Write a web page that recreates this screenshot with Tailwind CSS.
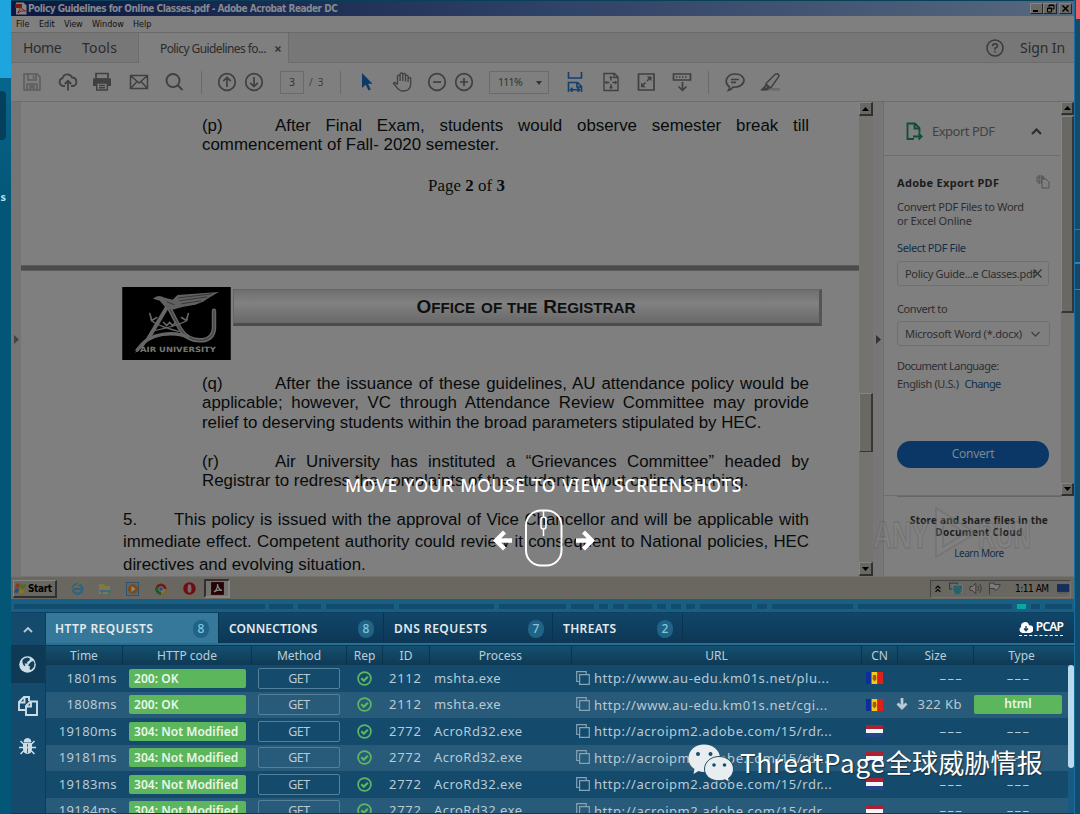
<!DOCTYPE html>
<html lang="en">
<head>
<meta charset="utf-8">
<title>Task report</title>
<script src="https://cdn.jsdelivr.net/npm/@tailwindcss/browser@4"></script>
</head>
<body class="w-[1080px] h-[814px] overflow-hidden bg-[#144b6d] font-['Noto_Sans',sans-serif]">
<div class="relative flex w-[1080px] h-[814px] overflow-hidden">

  <!-- left page edge -->
  <aside class="w-[11px] shrink-0 flex flex-col bg-gradient-to-b from-[#07658c] from-10% to-[#045676] to-25% overflow-hidden">
    <div class="h-[78px] bg-[#1fa5dd]"></div>
    <div class="mt-[13px] h-[49px] w-[6px] rounded-r bg-[#04405c]"></div>
    <div class="mt-[48px] h-[16px] w-[6px] flex justify-end text-[11px] leading-[18px] font-bold text-[#b4e2f2]">s</div>
  </aside>

  <main class="w-[1063px] shrink-0 flex flex-col">
    <!-- remote desktop -->
    <section class="h-[599px] shrink-0 flex flex-col bg-[#7f7f7f] overflow-hidden">
      <div class="h-[16px] shrink-0 border-t border-[#0a3f58] bg-gradient-to-r from-[#0b1840] via-[#2e4167] via-50% to-[#56697e] flex items-center pl-[4px] pr-[2px]">
        <svg class="w-[12px] h-[13px]" viewBox="0 0 12 13"><path d="M1 .5h7.500l3 3v9H1z" fill="#858585"/><path d="M0 2h7v4H0z" fill="#7b1713"/><path d="M2.500 11q3-3 3-7q1 4 5 5q-4-1-8 2" fill="none" stroke="#8a1c16"/></svg>
        <span class="ml-px whitespace-nowrap text-[10px] leading-[14px] font-bold text-[#858990] font-['DejaVu_Sans_Condensed'] tracking-[-0.51px]">Policy Guidelines for Online Classes.pdf - Adobe Acrobat Reader DC</span>
        <div class="ml-auto flex">
          <div class="w-[13px] h-[11px] bg-[#6a6863] border border-t-[#858585] border-l-[#858585] border-[#242424] flex items-end pl-[2px] pb-px"><i class="block w-[5px] h-[2px] bg-black"></i></div>
          <div class="w-[14px] h-[11px] bg-[#6a6863] border border-t-[#858585] border-l-[#858585] border-[#242424]"><svg class="block mx-auto w-[9px] h-[9px]" viewBox="0 0 9 9" fill="none" stroke="#000"><path d="M3 3V1h5v4H6M3 1.500h5M1.500 4h4v4h-4zM1 4.500h5"/></svg></div>
          <div class="ml-[2px] w-[13px] h-[11px] bg-[#6a6863] border border-t-[#858585] border-l-[#858585] border-[#242424]"><svg class="block mx-auto w-[9px] h-[9px]" viewBox="0 0 9 9"><path d="M1.500 1.500l6 6M7.500 1.500l-6 6" stroke="#000" stroke-width="1.500"/></svg></div>
        </div>
      </div>
      <nav class="h-[16px] shrink-0 flex items-center gap-[9px] pl-[5px] text-[9px] leading-[16px] text-[#101010] bg-[#7f7f7f] font-['DejaVu_Sans_Condensed']">
        <span class="w-[14px] whitespace-nowrap">File</span><span class="w-[16px] whitespace-nowrap">Edit</span><span class="w-[19px] whitespace-nowrap tracking-[-0.2px]">View</span><span class="w-[32px] whitespace-nowrap">Window</span><span>Help</span>
      </nav>
      <!-- document tabs -->
      <div class="h-[31px] shrink-0 flex bg-[#777] border-t border-[#6a6a6a] text-[#2b2b2b]">
        <div class="w-[128px] border-r border-b border-[#6c6c6c] flex items-center text-[14px] pl-[12px]">
          <span class="w-[59px] tracking-[-0.4px]">Home</span><span class="tracking-[0.2px]">Tools</span>
        </div>
        <div class="w-[149px] bg-[#7f7f7f] flex items-center pt-px pl-[21px] text-[12px] tracking-[-0.59px] whitespace-nowrap"><span class="w-[115px]">Policy Guidelines fo...</span><svg class="w-[6px] h-[6px]" viewBox="0 0 6 6"><path d="M.5.5l5 5M5.500.5l-5 5" stroke="#333" stroke-width="1.500"/></svg></div>
        <div class="grow border-l border-b border-[#6c6c6c] flex items-center justify-end pr-[9px]">
          <svg class="w-[18px] h-[18px]" viewBox="0 0 18 18" fill="none" stroke="#3a3a3a" stroke-width="1.500"><circle cx="9" cy="9" r="8"/><path d="M6.500 7.200Q6.700 4.800 9 4.800T11.500 7Q11.500 8.300 9 9.200V10.800M9 12v1.600"/></svg>
          <span class="ml-[16px] text-[14px] tracking-[-0.1px]">Sign In</span>
        </div>
      </div>
      <!-- toolbar -->
      <div class="h-[39px] shrink-0 flex items-center border-b border-[#6d6d6d] pl-[11px] text-[#3d3d3d] [&>svg]:w-5 [&>svg]:h-5 [&>svg]:shrink-0">
        <svg viewBox="0 0 20 20" fill="none" stroke="#5c5c5c" stroke-width="1.500"><path d="M2 2h13l3 3v13H2zM6 2v6h8V2M11.500 3.500v3M5 18v-6h10v6M7 14h6M7 16h6"/></svg>
        <svg class="ml-[16px]" viewBox="0 0 20 20" fill="none" stroke="#404040" stroke-width="1.800"><path d="M7 14H5a4 4 0 0 1-.5-7.800A5 5 0 0 1 14 5.500 4.300 4.300 0 0 1 15 14h-2M10 18.500V9M6.800 12L10 8.800l3.200 3.200"/></svg>
        <svg class="ml-[14px]" viewBox="0 0 20 20"><path d="M4 1.500h12V7H4z" fill="none" stroke="#404040" stroke-width="1.700"/><path d="M1 6.500h18V14h-3v-3H4v3H1z" fill="#404040"/><path d="M4.700 11h10.600v7H4.700zM7 13.500h6M7 15.800h6" fill="none" stroke="#404040" stroke-width="1.500"/></svg>
        <svg class="ml-[17px]" viewBox="0 0 20 20" fill="none" stroke="#404040" stroke-width="1.500"><path d="M1.500 3.500h17v13h-17zM2 4l8 7 8-7M2 16l6-6.500M18 16l-6-6.500"/></svg>
        <svg class="ml-[15px]" viewBox="0 0 20 20" fill="none" stroke="#404040" stroke-width="1.900"><circle cx="9" cy="8.500" r="6.500"/><path d="M13.500 13l5 5"/></svg>
        <i class="ml-[17px] w-px h-[23px] bg-[#6a6a6a]"></i>
        <svg class="ml-[15px]" viewBox="0 0 20 20" fill="none" stroke="#404040" stroke-width="1.700"><circle cx="10" cy="10" r="8.300"/><path d="M10 15V5.500M6.200 9.200L10 5.400l3.800 3.800"/></svg>
        <svg class="ml-[7px]" viewBox="0 0 20 20" fill="none" stroke="#404040" stroke-width="1.700"><circle cx="10" cy="10" r="8.300"/><path d="M10 5v9.500M6.200 10.800l3.800 3.800 3.800-3.800"/></svg>
        <div class="ml-[16px] w-[24px] h-[23px] border border-[#6b6b6b] text-[10px] leading-[21px] text-center text-[#333]">3</div>
        <span class="ml-[5px] w-[18px] text-[10px] whitespace-pre tracking-[1.200px]">/ 3</span>
        <i class="ml-[13px] w-px h-[23px] bg-[#6a6a6a]"></i>
        <svg class="ml-[16px]" viewBox="0 0 20 20"><path d="M5 1v15l3.700-3.300L11.500 18.500l2.200-1-2.600-5.700H15.500z" fill="#0f3a66"/></svg>
        <svg class="ml-[15px]" viewBox="0 0 20 20" fill="none" stroke="#404040" stroke-width="1.300"><path d="M5.500 12.500V4.500a1.300 1.300 0 0 1 2.600 0V9V2.300a1.300 1.300 0 0 1 2.700 0V9V2.700a1.300 1.300 0 0 1 2.700 0V9.500V4.500a1.300 1.300 0 0 1 2.600 0V10M16.100 6.500q1.300-1.500 2.600-.5v6.500q-.5 6.500-7.700 6.500c-5 0-6-4-9.500-7.500q.5-2.500 4 1"/></svg>
        <svg class="ml-[15px]" viewBox="0 0 20 20" fill="none" stroke="#404040" stroke-width="1.700"><circle cx="10" cy="10" r="8.300"/><path d="M6 10h8"/></svg>
        <svg class="ml-[7px]" viewBox="0 0 20 20" fill="none" stroke="#404040" stroke-width="1.700"><circle cx="10" cy="10" r="8.300"/><path d="M6 10h8M10 6v8"/></svg>
        <div class="ml-[15px] w-[60px] h-[23px] border border-[#6b6b6b] flex items-center justify-between pl-[8px] pr-[6px] pt-px text-[10.500px] tracking-[-0.7px] text-[#333]"><span>111%</span><svg class="w-[6px] h-[4px]" viewBox="0 0 6 4"><path d="M0 0h6L3 4z" fill="#333"/></svg></div>
        <svg class="ml-[16px]" viewBox="0 0 20 20" fill="none" stroke="#123f6e" stroke-width="1.600"><path d="M3.500 0v6h13V0M3.500 20v-9.500h9l4 4V20M12 10.500v4.500h4.500M6 17.800h8M7.500 15.800l-2 2 2 2M12.500 15.800l2 2-2 2" /></svg>
        <svg class="ml-[16px]" viewBox="0 0 20 20" fill="none" stroke="#404040" stroke-width="1.400"><path d="M3 1.500h10.500L17 5v13.500H3zM13 1.500V5.500h4M10 5v3.500M10 12v4M5 10.500h3.500M11.500 10.500H15M8.700 6L10 4.700 11.300 6M8.700 15L10 16.300 11.300 15M6 9.200L4.700 10.500 6 11.800M14 9.200l1.300 1.300L14 11.800"/></svg>
        <svg class="ml-[15px]" viewBox="0 0 20 20" fill="none" stroke="#404040" stroke-width="1.700"><path d="M2.500 2h15.500v16H2.500z"/><path d="M11 9l4-4M9.500 10.500L5.500 14.500"/><path d="M10.800 4.500h4.700v4.700zM5 10.500v4.700h4.700z" fill="#404040" stroke="none"/></svg>
        <svg class="ml-[16px]" viewBox="0 0 20 20" fill="none" stroke="#404040" stroke-width="1.700"><path d="M1.500 2h17v6h-17z"/><path d="M4 5h12" stroke-dasharray="1.500 1.500"/><path d="M10.500 10v8M6.500 14.500l4 3.800 4-3.800"/></svg>
        <i class="ml-[16px] w-px h-[23px] bg-[#6a6a6a]"></i>
        <svg class="ml-[16px]" viewBox="0 0 20 20" fill="none" stroke="#404040" stroke-width="1.700"><path d="M4.300 14.800C-1.500 10.500 1.500 2 10 2s11.500 6.500 6.500 11q-3 2.500-8.500 2.200Q6 18 3.500 18.300q1.500-2 .8-3.500zM6 7.500h8M6 10.300h5"/></svg>
        <svg class="ml-[15px]" viewBox="0 0 20 20"><path d="M8 16h12v2.500H6z" fill="#6a6a6a"/><path d="M6 11.500L15 2.500q1.500-1.500 3-.3t.3 3L11 15.500 8 16zM4.500 15q1-2 2-2.500l3 2.500-2 2.500H2z" fill="none" stroke="#404040" stroke-width="1.500"/><path d="M1 18.500l4-4 2.500 2L6 18.500z" fill="#404040"/></svg>
      </div>

      <!-- viewer -->
      <div class="h-[474px] shrink-0 flex">
        <div class="w-[10px] shrink-0 bg-[#757575] flex items-center justify-center"><svg class="w-[5px] h-[9px]" viewBox="0 0 5 9"><path d="M0 0l5 4.500L0 9z" fill="#444"/></svg></div>
        <article class="w-[838px] shrink-0 overflow-hidden bg-[#7f7f7f] text-[#080b0b] font-['Liberation_Sans'] text-[16.870px] leading-[20px] whitespace-nowrap">
          <div class="ml-[181px] w-[607px] pt-[14px]">
            <div class="flex"><span class="w-[73px]">(p)</span><p class="grow [text-align-last:justify]">After Final Exam, students would observe semester break till</p></div>
            <p class="mt-[-1px] tracking-[0.03px]">commencement of Fall- 2020 semester.</p>
          </div>
          <p class="mt-[21px] pl-[407px] font-['Liberation_Serif'] tracking-[0.06px]">Page <b>2</b> of <b>3</b></p>
          <div class="mt-[69px] h-[6px] bg-[#4b4b4b] border-y border-[#5d5d5d]"></div>
          <div class="mt-[16px] ml-[101px] flex">
            <svg class="w-[109px] h-[73px] shrink-0" viewBox="0 0 110 74">
              <rect width="110" height="74" fill="#000"/>
              <g fill="none" stroke="#666" stroke-linecap="round">
                <path d="M45 21L26 53" stroke-width="4"/>
                <path d="M48 22L59 43Q67 55 81 54Q92 53 93 42V24" stroke-width="4.500"/>
                <path d="M48 22L59 43Q67 55 81 54Q92 53 93 42V24" stroke="#454545" stroke-width="1.500"/>
                <path d="M15 64Q25 50 41 48T66 51" stroke-width="3.500"/>
                <path d="M29 33Q32 38 57 45M66 33Q62 38 29 45" stroke-width="1.300"/>
                <path d="M28 27l2 7 5-3M67 27l-2 7-5-3M42 36l3 3 3-3 3 3 3-3" stroke-width="1.700"/>
              </g>
              <path d="M13 67Q20 53 27 51L22 60z" fill="#666"/>
              <path d="M31 12Q36 7 43 11L51 13 56 8 98 5 88 11 82 15 74 18 62 20 51 23 44 21 38 14z" fill="#606060"/>
              <path d="M57 11l34-4M58 14l28-4M60 17l20-3M45 15l8 3" stroke="#2c2c2c" fill="none" stroke-width=".8"/>
              <text x="18" y="66" font-size="7.500" font-weight="bold" font-family="DejaVu Sans" fill="#767676" textLength="77" lengthAdjust="spacingAndGlyphs">AIR UNIVERSITY</text>
            </svg>
            <div class="mt-[2px] ml-[2px] w-[589px] h-[37px] border-t border-l border-[#666] border-r-3 border-r-[#555] border-b-3 border-b-[#4c4c4c] bg-gradient-to-b from-[#6f6f6f] via-[#818181] via-40% to-[#696969] flex justify-center items-center font-bold text-[19px] text-[#101010]"><span class="w-[219px] mt-[2px] -ml-px [text-align-last:justify]">O<small class="text-[15.200px]">FFICE</small> <small class="text-[15.200px]">OF THE</small> R<small class="text-[15.200px]">EGISTRAR</small></span></div>
          </div>
          <div class="ml-[181px] w-[607px] mt-[13px]">
            <div class="flex leading-[21px]"><span class="w-[73px]">(q)</span><p class="grow [text-align-last:justify]">After the issuance of these guidelines, AU attendance policy would be</p></div>
            <p class="leading-[18px] [text-align-last:justify]">applicable; however, VC through Attendance Review Committee may provide</p>
            <p class="leading-[21px]">relief to deserving students within the broad parameters stipulated by HEC.</p>
            <div class="mt-[19px] flex leading-[20px]"><span class="w-[73px]">(r)</span><p class="grow [text-align-last:justify]">Air University has instituted a “Grievances Committee” headed by</p></div>
            <p class="leading-[18px]">Registrar to redress the complaints of the students about online teaching.</p>
          </div>
          <div class="ml-[102px] w-[686px] mt-[19px] leading-[22px]">
            <div class="flex"><span class="w-[51px]">5.</span><p class="grow [text-align-last:justify]">This policy is issued with the approval of Vice Chancellor and will be applicable with</p></div>
            <p class="[text-align-last:justify]">immediate effect. Competent authority could review it consequent to National policies, HEC</p>
            <p class="leading-[24px]">directives and evolving situation.</p>
          </div>
        </article>
        <!-- document scrollbar -->
        <div class="w-[14px] shrink-0 bg-[#75736f] flex flex-col">
          <div class="h-[14px] bg-[#6a6863] border border-t-[#858585] border-l-[#858585] border-r-2 border-b-2 border-[#303030] flex items-center justify-center"><svg class="w-[7px] h-[4px]" viewBox="0 0 7 4"><path d="M0 4L3.500 0 7 4z"/></svg></div>
          <div class="mt-[277px] h-[59px] bg-[#6a6863] border border-t-[#858585] border-l-[#858585] border-r-2 border-[#363636]"></div>
          <div class="mt-auto h-[14px] bg-[#6a6863] border border-t-[#858585] border-l-[#858585] border-r-2 border-b-2 border-[#303030] flex items-center justify-center"><svg class="w-[7px] h-[4px]" viewBox="0 0 7 4"><path d="M0 0L3.500 4 7 0z"/></svg></div>
        </div>
        <div class="w-[11px] shrink-0 bg-[#777] border-r border-[#6e6e6e] flex items-center justify-center"><svg class="w-[5px] h-[9px]" viewBox="0 0 5 9"><path d="M0 0l5 4.500L0 9z" fill="#333"/></svg></div>
        <!-- export panel -->
        <div class="w-[190px] shrink-0 flex flex-col text-[11px] leading-[14px] text-[#2e2e2e] whitespace-nowrap">
          <div class="h-[394px] flex">
            <div class="w-[177px] flex flex-col border-b border-[#6e6e6e]">
              <div class="h-[54px] shrink-0 border-b border-[#6e6e6e] flex items-center pt-[5px] pl-[22px] pr-[19px]">
                <svg class="w-[17px] h-[19px]" viewBox="0 0 17 19" fill="none" stroke="#114d3d" stroke-width="1.800"><path d="M8 17H1.500V1.500H9L13.500 6v5M8.500 1.500v5h5M7 14.500h8M12.500 11.500l3.200 3-3.200 3"/></svg>
                <span class="ml-[9px] text-[13px] tracking-[-0.5px] text-[#414141]">Export PDF</span>
                <svg class="ml-auto w-[11px] h-[7px]" viewBox="0 0 11 7"><path d="M1 6l4.500-4.500L10 6" fill="none" stroke="#2e2e2e" stroke-width="2.200"/></svg>
              </div>
              <div class="pl-[13px] pr-[11px] flex flex-col">
                <div class="mt-[20px] flex h-[14px] text-[#1c1c1c] font-bold tracking-[0.29px]">Adobe Export PDF
                  <svg class="ml-auto -mt-[2px] w-[15px] h-[15px]" viewBox="0 0 15 15" fill="#5b5b5b"><circle cx="5.500" cy="5.500" r="4.500"/><path d="M1 5.500h9M5.500 1v9M3 2v7" stroke="#7f7f7f" stroke-width=".6"/><path d="M7 5h4l3 3v6H7z" fill="#7f7f7f" stroke="#555"/></svg>
                </div>
                <p class="mt-[10px] tracking-[-0.28px]">Convert PDF Files to Word<br><span class="tracking-[-0.15px]">or Excel Online</span></p>
                <p class="mt-[13px] tracking-[-0.37px] text-[#102f49]">Select PDF File</p>
                <div class="mt-[6px] w-[152px] h-[25px] rounded-[3px] border border-[#707070] flex items-center pl-[7px] tracking-[-0.31px]"><span class="w-[126px]">Policy Guide...e Classes.pdf</span><svg class="ml-[2px] w-[9px] h-[9px]" viewBox="0 0 9 9"><path d="M.5.5l8 8M8.500.5l-8 8" stroke="#333" stroke-width="1.200"/></svg></div>
                <p class="mt-[16px] tracking-[-0.4px]">Convert to</p>
                <div class="mt-[5px] w-[153px] h-[25px] rounded-[3px] border border-[#707070] flex items-center pt-px pl-[7px] tracking-[-0.24px]"><span class="w-[126px]">Microsoft Word (*.docx)</span><svg class="w-[9px] h-[6px]" viewBox="0 0 9 6"><path d="M.5 1l4 4 4-4" fill="none" stroke="#444" stroke-width="1.400"/></svg></div>
                <p class="mt-[13px] tracking-[-0.54px]">Document Language:</p>
                <p class="mt-[4px] tracking-[-0.36px]">English (U.S.)<span class="ml-[6px] text-[#102f49] tracking-[-0.6px]">Change</span></p>
                <div class="mt-[50px] w-[152px] h-[27px] rounded-full bg-[#0a3765] text-[#7b8793] text-[12px] leading-[26px] tracking-[-0.24px] text-center">Convert</div>
              </div>
            </div>
            <div class="w-[13px] bg-[#75736f] flex flex-col">
              <div class="h-[13px] bg-[#6a6863] border border-t-[#858585] border-l-[#858585] border-r-2 border-b-2 border-[#303030] flex items-center justify-center"><svg class="w-[7px] h-[4px]" viewBox="0 0 7 4"><path d="M0 4L3.500 0 7 4z"/></svg></div>
              <div class="h-[197px] mt-px bg-[#6a6863] border border-t-[#858585] border-l-[#858585] border-r-2 border-b-2 border-[#363636]"></div>
              <div class="mt-auto h-[13px] bg-[#6a6863] border border-t-[#858585] border-l-[#858585] border-r-2 border-b-2 border-[#303030] flex items-center justify-center"><svg class="w-[7px] h-[4px]" viewBox="0 0 7 4"><path d="M0 0L3.500 4 7 0z"/></svg></div>
            </div>
          </div>
          <div class="relative grow flex flex-col text-center text-[10px] leading-[13px] text-[#1e1e1e] font-bold">
            <div class="mx-[13px] border-t border-[#666]"></div>
            <p class="mt-[17px] tracking-[0.18px]">Store and share files in the</p>
            <p class="-mt-px tracking-[0.32px]">Document Cloud</p>
            <p class="mt-[8px] font-normal text-[#102f49] tracking-[-0.45px]">Learn More</p>
            <svg class="absolute left-[-14px] top-[9px] w-[170px] h-[54px]" viewBox="0 0 170 54"><g font-family="Liberation Sans" font-weight="bold" font-size="37" fill="#8a8a8a" fill-opacity=".28" stroke="#626262" stroke-opacity=".35" stroke-width="1.800"><text x="3" y="43" textLength="56" lengthAdjust="spacingAndGlyphs">ANY</text><text x="108" y="43" textLength="53" lengthAdjust="spacingAndGlyphs">RUN</text><path d="M66 3l40 25-40 24zM73 14v28l23-14z"/></g></svg>
          </div>
        </div>
      </div>

      <!-- taskbar -->
      <div class="h-[23px] shrink-0 bg-[#6a6761] border-t border-[#75736f] flex items-center pt-px pl-[2px] pr-[3px] font-['DejaVu_Sans_Condensed'] text-[10px] text-black">
        <div class="w-[44px] h-[18px] border border-t-[#858585] border-l-[#858585] border-r-2 border-b-2 border-[#303030] flex items-center font-bold tracking-[-0.4px]">
          <svg class="w-[13px] h-[12px] mr-px" viewBox="0 0 13 12"><path d="M2 2q2-1.500 4 0L5 6Q3 5 1 6z" fill="#8c3a17"/><path d="M7 2q2 1.500 5 0L11 6Q8 7.500 6 6z" fill="#4a7019"/><path d="M1 7q2-1.500 4 0L4 11Q2 10 0 11z" fill="#254d80"/><path d="M6 7q2 1.500 4 0L9 11q-2 1.500-4 0z" fill="#8d7517"/></svg>Start
        </div>
        <svg class="ml-[13px] w-[15px] h-[15px]" viewBox="0 0 15 15" fill="none"><circle cx="7.500" cy="8" r="4.700" stroke="#2c6582" stroke-width="2.600"/><path d="M4 8h8.500" stroke="#2c6582" stroke-width="2"/><path d="M1 13Q0 8 7 4t7-2" stroke="#79713a"/></svg>
        <svg class="ml-[13px] w-[14px] h-[14px]" viewBox="0 0 14 14"><path d="M1 2h5l1 2h5v8H1z" fill="#807947"/><path d="M2 8h11v2H2z" fill="#3d6b7d"/><path d="M3 10h2v4H3zM10 10h2v4h-2z" fill="#466f7e"/></svg>
        <svg class="ml-[14px] w-[14px] h-[14px]" viewBox="0 0 14 14"><rect x=".5" y=".5" width="12" height="13" fill="#54697a" stroke="#35526c"/><circle cx="7" cy="7" r="5" fill="#814a14"/><path d="M5.500 4v6l4-3z" fill="#8b8b8b"/></svg>
        <svg class="ml-[15px] w-[12px] h-[12px]" viewBox="0 0 12 12"><circle cx="6" cy="6" r="5.500" fill="#6f1d16"/><path d="M6 6L1.200 3.200A5.500 5.500 0 0 0 6 11.500z" fill="#195a2c"/><path d="M6 6h5.500A5.500 5.500 0 0 1 6 11.500z" fill="#877119"/><circle cx="6" cy="6" r="2.300" fill="#254b7a" stroke="#858585" stroke-width=".8"/></svg>
        <svg class="ml-[16px] w-[13px] h-[13px]" viewBox="0 0 13 13"><circle cx="6.500" cy="6.500" r="6.200" fill="#700d10"/><ellipse cx="6.500" cy="6.500" rx="2" ry="4.300" fill="#7a6868"/></svg>
        <div class="ml-[8px] w-[26px] h-[19px] border-2 border-[#303030] border-r-[#858585] border-b-[#858585] bg-[#757370] flex items-center justify-center"><svg class="w-[13px] h-[13px]" viewBox="0 0 13 13"><rect width="13" height="13" fill="#240304" stroke="#4b1213"/><path d="M3 10q4-3 3.500-8Q7 7 11 8.500 6 7.500 3 10" fill="none" stroke="#888" stroke-width="1.200"/></svg></div>
        <div class="ml-auto w-[141px] h-[18px] border border-[#434343] border-r-[#777] border-b-[#777] flex items-center pl-[4px]">
          <svg class="w-[6px] h-[8px]" viewBox="0 0 6 8"><path d="M.5 3.500L3 1l2.500 2.500M.5 7L3 4.500 5.500 7" fill="none" stroke="#000" stroke-width="1.200"/></svg>
          <svg class="ml-[8px] w-[14px] h-[13px]" viewBox="0 0 14 13"><rect x=".5" y="1" width="8" height="6" fill="#5b6d6d" stroke="#383838"/><rect x="4" y="3" width="9.500" height="7.500" fill="#1d5560" stroke="#7a7a7a"/><circle cx="8.500" cy="8.500" r="4" fill="#27616b" stroke="#4c7474" stroke-width=".6"/></svg>
          <svg class="ml-[6px] w-[14px] h-[13px]" viewBox="0 0 14 13" fill="none" stroke="#3b3b3b"><path d="M1 4.500h2.500L7 1v11L3.500 8.500H1z" fill="#777"/><path d="M9 4q1.500 2.500 0 5M11 2q3 4.500 0 9"/></svg>
          <svg class="ml-[6px] w-[14px] h-[13px]" viewBox="0 0 14 13" fill="#7b7b7b" stroke="#3d3d3d"><path d="M1.500 12.500V1h5v1.500h6L11 5.500 9 8H6.500V6.500h-5"/></svg>
          <span class="ml-[13px] w-[43px] tracking-[-0.5px] whitespace-nowrap">1:11 AM</span>
          <svg class="w-[13px] h-[12px]" viewBox="0 0 13 12"><path d="M0 1h12.500v8H0z" fill="#172d5a"/><path d="M1 10h10" stroke="#45546a"/></svg>
        </div>
      </div>
    </section>

    <!-- timeline -->
    <div id="timeline" class="h-[14px] shrink-0 bg-[#185f83] border-b border-[#0d4161] flex items-center pt-px pl-[3px]"></div>

    <!-- report -->
    <section class="h-[201px] flex border-b border-[#0d3a55] overflow-hidden">
      <div class="w-[35px] shrink-0 flex flex-col items-center border-r border-[#0e3c59]">
        <div class="w-full h-[33px] shrink-0 flex items-center justify-center border-b border-[#0c3853]"><svg class="w-[10px] h-[7px]" viewBox="0 0 10 7"><path d="M1 6l4-4 4 4" fill="none" stroke="#b7cad4" stroke-width="1.900"/></svg></div>
        <div class="w-full h-[37px] shrink-0 bg-[#0f3a55] flex items-center justify-center pr-[2px]"><svg class="w-[17px] h-[17px]" viewBox="0 0 17 17"><circle cx="8.500" cy="8.500" r="8.300" fill="#cddde6"/><path d="M3.500 4q2-2.500 5-2.500l2.500 1-.5 2-2.500 1.500.5 1.500H5.500l1 2-1 .5Q3 8 3.500 4zM10.500 7.500l2-2 2-.5 1 2.500-.5 3.500-3 3-1.500-1 .5-2.500-2-1z" fill="#123f5b"/></svg></div>
        <svg class="mt-[13px] -ml-px w-[20px] h-[20px]" viewBox="0 0 20 20" fill="none" stroke="#cddde6" stroke-width="1.900"><path d="M7 14H1V6l5-5h5v4M1 6.500h5.500V1M8 19V10l4.500-4.500H19V19zM8 10.500h5V5.500"/></svg>
        <svg class="mt-[22px] -ml-[2px] w-[17px] h-[17px]" viewBox="0 0 17 17" fill="#cddde6" stroke="#cddde6"><path d="M5 4a3.500 3.500 0 0 1 7 0z"/><path d="M4.500 5.500h8v6a4 4 0 0 1-8 0z"/><path d="M8.500 6v9" stroke="#144b6d" stroke-width=".8"/><path d="M1.500 3l3.500 3.500M15.500 3L12 6.500M0 9.500h17M1.500 16L5 12.500M15.500 16L12 12.500" stroke-width="1.500" fill="none"/></svg>
      </div>
      <div class="grow flex flex-col">
        <div class="h-[33px] shrink-0 flex items-stretch bg-gradient-to-b from-[#114669] to-[#0c3656] border-b border-[#0c3853] text-[12px] font-semibold text-[#e3eaee]">
         <div class="grow flex border-b-2 border-[#2b6e91]">
          <div class="w-[173px] bg-[#36789a] border-r border-[#0b3350] flex items-center pt-[2px] pl-[9px] pr-[9px]"><span class="tracking-[0.4px]">HTTP REQUESTS</span><b class="ml-auto w-[16px] h-[18px] rounded-full bg-[#1f6386] text-[#82c6dd] text-center leading-[17px] font-medium">8</b></div>
          <div class="w-[165px] border-r border-[#0b3350] flex items-center pt-[2px] pl-[10px] pr-[9px]"><span class="tracking-[0.12px]">CONNECTIONS</span><b class="ml-auto w-[16px] h-[18px] rounded-full bg-[#1f6386] text-[#82c6dd] text-center leading-[17px] font-medium">8</b></div>
          <div class="w-[169px] border-r border-[#0b3350] flex items-center pt-[2px] pl-[10px] pr-[8px]"><span class="tracking-[0.49px]">DNS REQUESTS</span><b class="ml-auto w-[16px] h-[18px] rounded-full bg-[#1f6386] text-[#82c6dd] text-center leading-[17px] font-medium">7</b></div>
          <div class="w-[130px] border-r border-[#0b3350] flex items-center pt-[2px] pl-[10px] pr-[9px]"><span class="tracking-[0.34px]">THREATS</span><b class="ml-auto w-[16px] h-[18px] rounded-full bg-[#1f6386] text-[#82c6dd] text-center leading-[17px] font-medium">2</b></div>
          <div class="ml-auto mr-[11px] mt-[6px] h-[17px] border-b border-dashed border-white flex items-center text-white tracking-[-0.83px]"><svg class="w-[14px] h-[11px] mr-[3px]" viewBox="0 0 14 11"><path d="M3.200 11A3.200 3.200 0 0 1 2.200 5 4 4 0 0 1 10 3.200 3.900 3.900 0 0 1 11 11z" fill="#fff"/><path d="M7 4v4M5 6.500l2 2.200 2-2.200" stroke="#0e3c5c" stroke-width="1.300" fill="none"/></svg>PCAP</div>
         </div>
        </div>
        <div class="h-[19px] shrink-0 flex text-center text-[12px] leading-[19px] text-[#bccdd7] bg-gradient-to-b from-[#15506f] to-[#0e3a55] [&>div]:border-r [&>div]:border-[#0b3450]">
          <div class="w-[77px]">Time</div><div class="w-[129px]">HTTP code</div><div class="w-[95px]">Method</div><div class="w-[36px]">Rep</div><div class="w-[47px]">ID</div><div class="w-[142px]">Process</div><div class="w-[290px]">URL</div><div class="w-[36px]">CN</div><div class="w-[76px]">Size</div><div class="w-[95px] border-r-0!">Type</div>
        </div>
        <div class="grow flex overflow-hidden">
          <div id="rows" class="w-[1022px] shrink-0"></div>
          <div class="w-[6px] bg-[#175b80]"><div class="h-[103px] rounded bg-[#b8daec]"></div></div>
        </div>
      </div>
    </section>
  </main>

  <!-- right page edge -->
  <aside class="w-[6px] shrink-0 flex flex-col bg-[#144b6d] border-l border-[#1b6f9f]">
    <div class="h-[19px] ml-px bg-[#ee6065]"></div>
    <div class="mt-[210px] h-[33px] border-t border-[#2580b0]"></div>
    <div class="h-[28px] border-t-2 border-b border-[#2387c0] bg-[#17466b]"></div>
  </aside>

  <!-- screenshot hint -->
  <div class="absolute left-[345px] top-[474px] w-[397px] flex flex-col items-center text-white">
    <p class="w-[397px] text-[17.500px] leading-[22px] tracking-[0.7px] font-medium whitespace-nowrap [text-align-last:justify]">MOVE YOUR MOUSE TO VIEW SCREENSHOTS</p>
    <svg class="mt-[13px] w-[102px] h-[58px]" viewBox="0 0 102 58" fill="none" stroke="#fff"><rect x="33" y="1.500" width="35.500" height="55" rx="15" stroke-width="2"/><path d="M50.500 2v6M50.500 20v7" stroke-width="1.500"/><rect x="48" y="8" width="5" height="12" rx="2.500" stroke-width="1.500"/><path d="M19 31.500H4M11.500 23l-8.500 8.500 8.500 8.500M83 31.500h14M90.500 23l8.500 8.500-8.500 8.500" stroke-width="4.300"/></svg>
  </div>

  <!-- account watermark -->
  <div class="absolute left-[688px] top-[742px] flex items-center">
    <svg class="w-[47px] h-[40px] mt-[2px]" viewBox="0 0 47 40"><path d="M16 .5c9 0 16 6 16 13.500S25 28 16 28q-3 0-5.500-1L5.500 30l1-5C2.500 22.500.5 18.500.5 14 .5 6.500 7 .5 16 .5z" fill="#e8edf0"/><circle cx="10" cy="10" r="2" fill="#194c6a"/><circle cx="22.500" cy="10" r="2" fill="#194c6a"/><path d="M31 12.500c8 0 14.500 5.500 14.500 12.500 0 4-2 7-5 9.300l1 4-4.500-2.500q-3 1-6 1C23 36.800 16.500 32 16.500 25S23 12.500 31 12.500z" fill="#e8edf0" stroke="#244b61" stroke-width="1"/><circle cx="26" cy="21" r="1.800" fill="#194c6a"/><circle cx="36.500" cy="21" r="1.800" fill="#194c6a"/></svg>
    <span class="ml-[5px] -mt-[2px] text-[26px] leading-[38px] text-white whitespace-nowrap font-['Noto_Sans_CJK_SC',sans-serif] tracking-[0.8px] [text-shadow:1px_1px_1px_#1c2f3b]">ThreatPage<span class="tracking-[0.2px]">全球威胁情报</span></span>
  </div>
</div>

<template id="row">
  <div class="h-[26.500px] flex items-center text-[13px] leading-[18px] text-[#b8cad4] odd:bg-[#144b6d] even:bg-[#285a7a] whitespace-nowrap">
    <span class="time w-[71px] text-right tracking-[0.4px] -mt-px"></span>
    <span class="code ml-[12px] w-[117px] h-[19px] rounded-[2px] bg-[#5cb75c] pl-[5px] text-[12px] font-semibold leading-[19px] text-[#eaf6ea] tracking-[0.03px]"></span>
    <span class="ml-[12px] w-[82px] h-[21px] rounded-[2px] border border-[#55809a] text-center text-[12.500px] leading-[19px] tracking-[-0.5px]">GET</span>
    <svg class="ml-[17px] w-[15px] h-[15px]" viewBox="0 0 15 15" fill="none" stroke="#5cb860"><circle cx="7.500" cy="7.500" r="6.400" stroke-width="1.700"/><path d="M4.300 7.300l2.500 2.500 4-4" stroke-width="2.200"/></svg>
    <span class="pid ml-[17px] w-[45px] tracking-[0.75px] -mt-px"></span>
    <span class="proc w-[142px] tracking-[0.46px] -mt-px"></span>
    <svg class="w-[14px] h-[14px] -mt-px" viewBox="0 0 14 14" fill="none" stroke="#86a2b3" stroke-width="1.200"><path d="M3.500 10.500H.7V.7h9.500v2.500M3.600 3.600h9.700v9.700H3.600z"/></svg>
    <span class="url ml-[4px] w-[272px] tracking-[0.55px]"></span>
    <span class="flag w-[17px] h-[12px]"></span>
    <span class="size ml-[13px] w-[66px] flex items-center justify-end tracking-[0.45px] -mt-px"></span>
    <span class="type ml-[12px] w-[88px] h-[19px] rounded-[2px] text-center leading-[18px]"></span>
  </div>
</template>
<template id="md"><svg class="w-[17px] h-[12px] block" viewBox="0 0 17 12"><path d="M0 0h6v12H0z" fill="#0b2f9b"/><path d="M5.500 0h6v12h-6z" fill="#f2cb14"/><path d="M11.300 0H17v12h-5.700z" fill="#d9231a"/><path d="M7 3h3l.5 4-2 2.500-2-2.500z" fill="#a4571c"/></svg></template>
<template id="nl"><svg class="w-[17px] h-[12px] block" viewBox="0 0 17 12"><path d="M0 0h17v4H0z" fill="#ab2134"/><path d="M0 4h17v4H0z" fill="#f4f6f8"/><path d="M0 8h17v4H0z" fill="#23468b"/></svg></template>
<template id="down"><svg class="w-[12px] h-[12px] mr-auto" viewBox="0 0 12 12"><path d="M6 0v9M1.500 5.500L6 10l4.500-4.500" fill="none" stroke="#b8cad4" stroke-width="2.800"/></svg></template>
<template id="dash"><span class="tracking-[1.300px] -mr-px">–––</span></template>
<script>
const bars = [[14,265],[269,293],[298,321],[326,394],[399,494],[499,566],[571,594],[599,608],[613,624],[628,652],[657,666],[671,681],[686,695],[700,752],[757,767],[772,853],[858,1012],[1017,1026],[1031,1040],[1045,1072]];
let end = 14;
for (const [a, b] of bars) {
  const d = document.createElement('i');
  d.className = a === 1017 ? 'block shrink-0 h-[5px] bg-[#04ab9c]' : 'block shrink-0 h-[5px] bg-[#124d70]';
  d.style.marginLeft = a - end + 'px';
  d.style.width = b - a + 'px';
  end = b;
  document.getElementById('timeline').append(d);
}
const get = id => document.getElementById(id).content.cloneNode(true);
const adobe = 'http://acroipm2.adobe.com/15/rdr...';
const data = [
  ['1801ms', '200: OK', '2112', 'mshta.exe', 'http://www.au-edu.km01s.net/plu...', 'md'],
  ['1808ms', '200: OK', '2112', 'mshta.exe', 'http://www.au-edu.km01s.net/cgi...', 'md', '322 Kb', 'html'],
  ['19180ms', '304: Not Modified', '2772', 'AcroRd32.exe', adobe, 'nl'],
  ['19181ms', '304: Not Modified', '2772', 'AcroRd32.exe', adobe, 'nl'],
  ['19183ms', '304: Not Modified', '2772', 'AcroRd32.exe', adobe, 'nl'],
  ['19184ms', '304: Not Modified', '2772', 'AcroRd32.exe', adobe, 'nl'],
];
for (const [t, c, id, p, u, f, s, ty] of data) {
  const r = get('row'), q = k => r.querySelector('.' + k);
  q('time').textContent = t; q('code').textContent = c; q('pid').textContent = id; q('proc').textContent = p; q('url').textContent = u;
  q('flag').append(get(f));
  if (s) q('size').append(get('down'));
  q('size').append(s || get('dash'));
  q('type').append(ty || get('dash'));
  if (ty) q('type').classList.add('bg-[#5cb75c]', 'text-[12px]', 'font-semibold', 'text-[#eaf6ea]');
  document.getElementById('rows').append(r);
}
</script>
</body>
</html>
